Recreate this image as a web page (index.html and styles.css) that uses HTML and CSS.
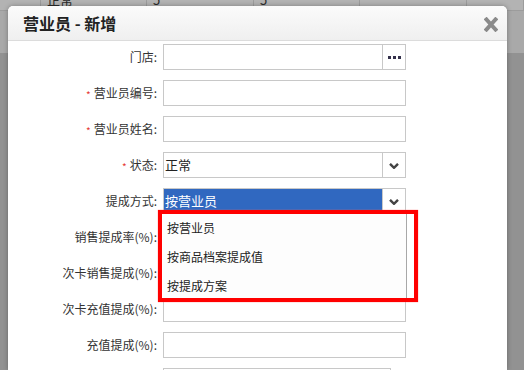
FILE: index.html
```html
<!DOCTYPE html>
<html lang="zh-CN">
<head>
  <meta charset="UTF-8">
  <title>营业员 - 新增</title>
  <link rel="stylesheet" href="styles.css">
</head>
<body>

<div class="page">
  <div class="table-row first">
    <div class="cell"></div>
    <div class="cell"><span class="cut">正常</span></div>
    <div class="cell"><span class="cut">5</span></div>
    <div class="cell"><span class="cut">5</span></div>
    <div class="cell"></div>
    <div class="cell"></div>
  </div>
  <div class="table-row second"></div>
</div>

<div class="modal">
  <div class="modal-head">
    <h3>营业员 - 新增</h3>
    <span class="close">
      <svg width="14" height="15" viewBox="0 0 14 15">
        <path d="M2.5 2.5 L11.5 12.5 M11.5 2.5 L2.5 12.5" stroke="#8a8a8a" stroke-width="4" stroke-linecap="square" fill="none"/>
      </svg>
    </span>
  </div>

  <div class="modal-body">
    <label>门店:</label>
    <div class="input with-btn"><span class="btn dots"><i></i><i></i><i></i></span></div>

    <label><em>*</em>营业员编号:</label>
    <div class="input"></div>

    <label><em>*</em>营业员姓名:</label>
    <div class="input"></div>

    <label><em>*</em>状态:</label>
    <div class="input with-btn"><span class="value">正常</span><span class="btn"><svg class="chev" width="10" height="6" viewBox="0 0 10 6"><polyline points="1,0.8 5,4.8 9,0.8" stroke="#444" stroke-width="2.4" fill="none"/></svg></span></div>

    <label>提成方式:</label>
    <div class="input with-btn open"><span class="value picked">按营业员</span><span class="btn"><svg class="chev" width="10" height="6" viewBox="0 0 10 6"><polyline points="1,0.8 5,4.8 9,0.8" stroke="#444" stroke-width="2.4" fill="none"/></svg></span></div>

    <label>销售提成率(%):</label>
    <div class="input"></div>

    <label>次卡销售提成(%):</label>
    <div class="input"></div>

    <label>次卡充值提成(%):</label>
    <div class="input"></div>

    <label>充值提成(%):</label>
    <div class="input"></div>

    <label></label>
    <div class="input short"></div>
  </div>

  <ul class="dropdown">
    <li>按营业员</li>
    <li>按商品档案提成值</li>
    <li>按提成方案</li>
  </ul>
  <div class="mark"></div>
</div>

</body>
</html>
```

FILE: styles.css
```css
body {
  margin: 0;
  font-family: "Noto Sans CJK SC", "Microsoft YaHei", sans-serif;
  font-size: 12px;
  color: #333;
  background: #929292;
  height: 370px;
  overflow: hidden;
}

.page { height: 370px; }
.table-row.first {
  display: grid;
  grid-template-columns: 41px 106px 107px 106px 107px 1fr;
  height: 10px;
  background: #b3b3b3;
  border-bottom: 1px solid #9c9c9c;
  overflow: hidden;
}
.cell {
  border-right: 1px solid #9c9c9c;
  padding-left: 6px;
  line-height: 12px;
}
.cut { display: block; margin-top: -6px; color: #2a2a2a; font-size: 13px; }
.table-row.second { height: 42px; background: #a9a9a9; }

.modal {
  position: absolute;
  left: 8px;
  top: 6px;
  width: 499px;
  bottom: 0;
  overflow: hidden;
  background: #fff;
  border-radius: 5px 5px 0 0;
  box-shadow: 0 0 5px rgba(0,0,0,0.3);
}

.modal-head {
  height: 34px;
  display: flex;
  align-items: center;
  justify-content: space-between;
  padding: 0 9px 0 15px;
  background: linear-gradient(#fbfbfb, #efefef);
  border-bottom: 1px solid #dcdcdc;
  border-radius: 5px 5px 0 0;
}
.modal-head h3 {
  margin: 0;
  font-size: 16px;
  font-weight: bold;
  color: #222;
  line-height: 20px;
}
.close { display: flex; margin-top: 2px; }

.modal-body {
  display: grid;
  grid-template-columns: 150px 243px;
  grid-auto-rows: 26px;
  column-gap: 5px;
  row-gap: 10px;
  padding-top: 3px;
}
.modal-body label {
  text-align: right;
  line-height: 26px;
  padding-right: 1px;
  color: #333;
  white-space: nowrap;
}
.modal-body label em {
  font-style: normal;
  color: #e53935;
  font-size: 10px;
  margin-right: 3px;
  vertical-align: -1px;
}

.input {
  box-sizing: border-box;
  height: 26px;
  border: 1px solid #c8c8c8;
  background: #fff;
  display: flex;
  align-items: stretch;
}
.input.short { width: 228px; }
.with-btn .value {
  flex: 1;
  padding-left: 1px;
  line-height: 24px;
  color: #222;
  font-size: 13px;
}
.with-btn .value.picked {
  background: #3068c0;
  color: #fff;
}
.btn {
  margin-left: auto;
  width: 22px;
  border-left: 1px solid #c8c8c8;
  display: flex;
  align-items: center;
  justify-content: center;
}
.dots i {
  width: 3px;
  height: 3px;
  background: #33304a;
  margin: 0 1px;
}
.chev { margin-top: 1px; }

.dropdown {
  position: absolute;
  left: 155px;
  top: 207px;
  width: 244px;
  box-sizing: border-box;
  margin: 0;
  padding: 0;
  list-style: none;
  background: #fdfdfd;
  border-right: 1px solid #a8a8a8;
}
.dropdown li {
  height: 29px;
  line-height: 29px;
  padding-left: 4px;
  font-size: 12px;
  color: #222;
}

.mark {
  position: absolute;
  left: 150px;
  top: 204px;
  width: 260px;
  height: 92px;
  box-sizing: border-box;
  border: 4px solid #ff0000;
  box-shadow: 0 0 1px #ff6666;
}
```
